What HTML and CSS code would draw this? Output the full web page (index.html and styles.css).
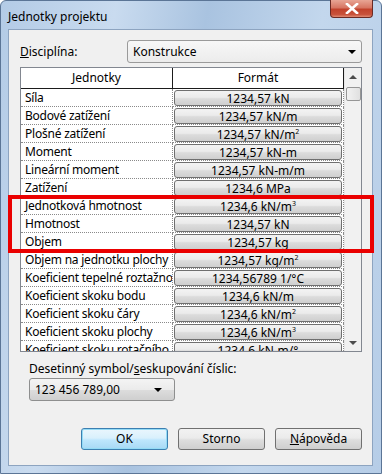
FILE: index.html
```html
<!DOCTYPE html>
<html>
<head>
<meta charset="utf-8">
<link rel="stylesheet" href="styles.css">
</head>
<body>
<div class="window">
  <div class="titlebar">
    <span class="title">Jednotky projektu</span>
    <div class="close"><svg width="14" height="11" viewBox="0 0 14 11"><path d="M2 1 L12 10 M12 1 L2 10" stroke="#fff" stroke-width="2.6" stroke-linecap="square"/></svg></div>
  </div>
  <div class="client">
    <div class="disc-row">
      <span class="label"><u>D</u>isciplína:</span>
      <div class="combo combo-disc"><span>Konstrukce</span><span class="arrow"></span></div>
    </div>
    <div class="grid">
      <div class="cols">
        <div class="row head">
          <div class="c1">Jednotky</div>
          <div class="c2">Formát</div>
        </div>
        <div class="row"><div class="c1">Síla</div><div class="c2"><div class="fbtn">1234,57 kN</div></div></div>
        <div class="row"><div class="c1">Bodové zatížení</div><div class="c2"><div class="fbtn">1234,57 kN/m</div></div></div>
        <div class="row"><div class="c1">Plošné zatížení</div><div class="c2"><div class="fbtn">1234,57 kN/m<sup>2</sup></div></div></div>
        <div class="row"><div class="c1">Moment</div><div class="c2"><div class="fbtn">1234,57 kN-m</div></div></div>
        <div class="row"><div class="c1">Lineární moment</div><div class="c2"><div class="fbtn">1234,57 kN-m/m</div></div></div>
        <div class="row"><div class="c1">Zatížení</div><div class="c2"><div class="fbtn">1234,6 MPa</div></div></div>
        <div class="row"><div class="c1">Jednotková hmotnost</div><div class="c2"><div class="fbtn">1234,6 kN/m<sup>3</sup></div></div></div>
        <div class="row"><div class="c1">Hmotnost</div><div class="c2"><div class="fbtn">1234,57 kN</div></div></div>
        <div class="row"><div class="c1">Objem</div><div class="c2"><div class="fbtn">1234,57 kg</div></div></div>
        <div class="row"><div class="c1">Objem na jednotku plochy</div><div class="c2"><div class="fbtn">1234,57 kg/m<sup>2</sup></div></div></div>
        <div class="row"><div class="c1">Koeficient tepelné roztažno</div><div class="c2"><div class="fbtn">1234,56789 1/°C</div></div></div>
        <div class="row"><div class="c1">Koeficient skoku bodu</div><div class="c2"><div class="fbtn">1234,6 kN/m</div></div></div>
        <div class="row"><div class="c1">Koeficient skoku čáry</div><div class="c2"><div class="fbtn">1234,6 kN/m<sup>2</sup></div></div></div>
        <div class="row"><div class="c1">Koeficient skoku plochy</div><div class="c2"><div class="fbtn">1234,6 kN/m<sup>3</sup></div></div></div>
        <div class="row"><div class="c1">Koeficient skoku rotačního</div><div class="c2"><div class="fbtn">1234,6 kN-m/°</div></div></div>
      </div>
      <div class="scrollbar">
        <div class="sb-arrow up"></div>
        <div class="sb-thumb"></div>
        <div class="sb-track"></div>
        <div class="sb-arrow down"></div>
      </div>
    </div>
    <div class="dec">
      <div class="label">Desetinný symbol/<u>s</u>eskupování číslic:</div>
      <div class="combo combo-dec"><span>123 456 789,00</span><span class="arrow"></span></div>
    </div>
    <div class="buttons">
      <div class="btn default">OK</div>
      <div class="btn">Storno</div>
      <div class="btn"><u>N</u>ápověda</div>
    </div>
  </div>
  <div class="highlight"></div>
</div>
</body>
</html>
```
FILE: styles.css
```css
html, body {
  margin: 0;
  padding: 0;
  background: #ffffff;
}
body {
  font-family: "Noto Sans", "Open Sans", sans-serif;
  font-size: 12px;
  color: #000;
}
.window {
  position: relative;
  width: 382px;
  height: 474px;
  box-sizing: border-box;
  border: 1px solid #5b7596;
  border-radius: 6px 6px 0 0;
  background: linear-gradient(100deg, #b3cbe6 0%, #c9dbef 25%, #a9c3e0 45%, #c3d7ed 70%, #b6cde7 100%);
  display: flex;
  flex-direction: column;
  padding: 0 8px 7px 7px;
}
.titlebar {
  height: 28px;
  display: flex;
  align-items: flex-start;
  justify-content: space-between;
}
.title {
  padding-top: 7px;
  font-size: 12px;
  color: #000;
}
.close {
  width: 43px;
  height: 18px;
  margin-top: -1px;
  box-sizing: border-box;
  border: 1px solid #6a2a24;
  border-top: none;
  border-radius: 0 0 4px 4px;
  background: linear-gradient(#e8a595 0%, #d77663 45%, #c2422c 55%, #c8523b 85%, #e08b74 100%);
  display: flex;
  align-items: center;
  justify-content: center;
}
.client {
  flex: 1;
  background: #f0f0f0;
  border: 1px solid #8da4c0;
  display: flex;
  flex-direction: column;
  padding: 10px 10px 0 11px;
}
.disc-row {
  display: flex;
  align-items: center;
  justify-content: space-between;
  height: 23px;
}
.combo {
  box-sizing: border-box;
  height: 23px;
  border: 1px solid #8e8f8f;
  border-radius: 3px;
  background: linear-gradient(#f4f4f4 0%, #ebebeb 50%, #dddddd 51%, #cfcfcf 100%);
  display: flex;
  align-items: center;
  justify-content: space-between;
  padding: 0 6px 0 5px;
}
.combo-disc {
  width: 235px;
  background: linear-gradient(#f7f7f7, #ececec);
  border-color: #9a9a9a;
  padding-right: 5px;
}
.arrow {
  width: 0;
  height: 0;
  border-left: 4px solid transparent;
  border-right: 4px solid transparent;
  border-top: 4px solid #000;
}
.grid {
  margin-top: 4px;
  height: 285px;
  box-sizing: border-box;
  border: 1px solid #828790;
  background: #fff;
  display: flex;
  overflow: hidden;
}
.cols {
  width: 323px;
  display: flex;
  flex-direction: column;
  overflow: hidden;
}
.row {
  display: flex;
  height: 18px;
  flex: none;
}
.row .c1 {
  width: 152px;
  box-sizing: border-box;
  border-right: 1px dotted #8a8a8a;
  border-bottom: 1px dotted #8a8a8a;
  padding-left: 4px;
  white-space: nowrap;
  overflow: hidden;
  line-height: 17px;
  letter-spacing: -0.22px;
}
.row .c2 {
  flex: 1;
  box-sizing: border-box;
  border-bottom: 1px dotted #8a8a8a;
  border-right: 1px dotted #8a8a8a;
  padding: 1px 1px 0 1px;
}
.row.head {
  height: 21px;
}
.row.head .c1, .row.head .c2 {
  border-right: 1px solid #1b1b1b;
  border-bottom: 1px solid #1b1b1b;
  text-align: center;
  line-height: 20px;
  padding: 0;
  letter-spacing: 0;
}
.fbtn {
  height: 16px;
  box-sizing: border-box;
  border: 1px solid #6f6f6f;
  border-radius: 3px;
  background: linear-gradient(#f3f3f3 0%, #ebebeb 45%, #dcdcdc 55%, #cfcfcf 100%);
  text-align: center;
  line-height: 15px;
  white-space: nowrap;
  overflow: hidden;
}
.fbtn sup {
  font-size: 7px;
  vertical-align: 5px;
  line-height: 0;
}
.scrollbar {
  flex: 1;
  background: #f1f1f1;
  border-left: 1px solid #e6e6e6;
  display: flex;
  flex-direction: column;
  align-items: center;
}
.sb-arrow {
  height: 17px;
  display: flex;
  align-items: center;
  justify-content: center;
}
.sb-arrow.up::before {
  content: "";
  border-left: 4px solid transparent;
  border-right: 4px solid transparent;
  border-bottom: 4px solid #4d4d4d;
}
.sb-arrow.down::before {
  content: "";
  border-left: 4px solid transparent;
  border-right: 4px solid transparent;
  border-top: 4px solid #4d4d4d;
}
.sb-thumb {
  width: 15px;
  height: 14px;
  box-sizing: border-box;
  border: 1px solid #969696;
  border-radius: 2px;
  background: linear-gradient(90deg, #f2f2f2, #e0e0e0);
  margin-top: 2px;
}
.sb-track {
  flex: 1;
}
.dec {
  margin-top: 9px;
  padding-left: 9px;
  display: flex;
  flex-direction: column;
}
.dec .label {
  line-height: 15px;
  margin-bottom: 2px;
}
.combo-dec {
  width: 146px;
  padding-right: 12px;
}
.buttons {
  margin-top: 27px;
  display: flex;
  justify-content: flex-end;
  gap: 10px;
}
.btn {
  width: 87px;
  height: 22px;
  box-sizing: border-box;
  border: 1px solid #707070;
  border-radius: 3px;
  background: linear-gradient(#f2f2f2 0%, #ebebeb 45%, #dddddd 55%, #cfcfcf 100%);
  text-align: center;
  line-height: 20px;
}
.btn.default {
  border-color: #3c7fb1;
  box-shadow: inset 0 0 0 1px #94dbf6;
  background: linear-gradient(#eaf6fd 0%, #d9f0fc 45%, #bee6fd 55%, #a7d9f5 100%);
}
.highlight {
  position: absolute;
  left: 7px;
  top: 194px;
  width: 366px;
  height: 58px;
  box-sizing: border-box;
  border: 4px solid #ea0000;
}
```
